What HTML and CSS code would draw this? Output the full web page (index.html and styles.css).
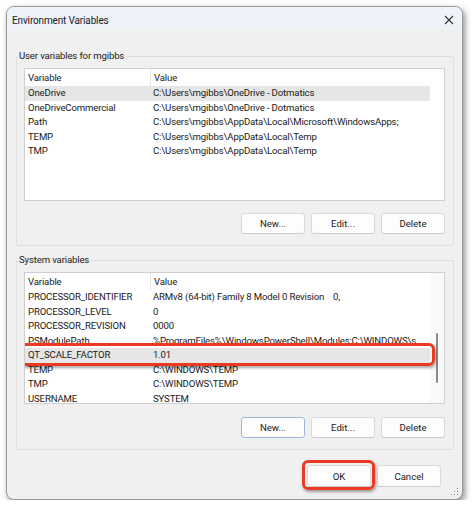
FILE: index.html
```html
<!DOCTYPE html>
<html lang="en">

<head>
  <meta charset="UTF-8">
  <title>Environment Variables</title>
  <link rel="stylesheet" href="styles.css">
</head>

<body>
  <div class="window">
    <div class="titlebar">
      <span class="title">Environment Variables</span>
      <svg class="close" width="10" height="10" viewBox="0 0 10 10">
        <path d="M1 1 L9 9 M9 1 L1 9" stroke="#333" stroke-width="1.1" fill="none" />
      </svg>
    </div>

    <div class="content">
      <!-- user block -->
      <fieldset class="group">
        <legend>User variables for mgibbs</legend>
        <div class="list">
          <div class="list-body">
            <div class="head"><span>Variable</span><span>Value</span></div>
            <div class="row sel"><span>OneDrive</span><span>C:\Users\mgibbs\OneDrive - Dotmatics</span></div>
            <div class="row"><span>OneDriveCommercial</span><span>C:\Users\mgibbs\OneDrive - Dotmatics</span></div>
            <div class="row"><span>Path</span><span>C:\Users\mgibbs\AppData\Local\Microsoft\WindowsApps;</span></div>
            <div class="row"><span>TEMP</span><span>C:\Users\mgibbs\AppData\Local\Temp</span></div>
            <div class="row"><span>TMP</span><span>C:\Users\mgibbs\AppData\Local\Temp</span></div>
          </div>
          <div class="scroll"></div>
        </div>
        <div class="buttons">
          <button>New...</button>
          <button>Edit...</button>
          <button>Delete</button>
        </div>
      </fieldset>

      <!-- system block -->
      <fieldset class="group sys">
        <legend>System variables</legend>
        <div class="list">
          <div class="list-body">
            <div class="head"><span>Variable</span><span>Value</span></div>
            <div class="row"><span>PROCESSOR_IDENTIFIER</span><span>ARMv8 (64-bit) Family 8 Model 0 Revision&nbsp;&nbsp;&nbsp; 0,</span></div>
            <div class="row"><span>PROCESSOR_LEVEL</span><span>0</span></div>
            <div class="row"><span>PROCESSOR_REVISION</span><span>0000</span></div>
            <div class="row"><span>PSModulePath</span><span>%ProgramFiles%\WindowsPowerShell\Modules;C:\WINDOWS\s...</span></div>
            <div class="row sel marked"><span>QT_SCALE_FACTOR</span><span>1.01</span></div>
            <div class="row"><span>TEMP</span><span>C:\WINDOWS\TEMP</span></div>
            <div class="row"><span>TMP</span><span>C:\WINDOWS\TEMP</span></div>
            <div class="row"><span>USERNAME</span><span>SYSTEM</span></div>
          </div>
          <div class="scroll track">
            <div class="thumb"></div>
          </div>
        </div>
        <div class="buttons">
          <button class="focus">New...</button>
          <button>Edit...</button>
          <button>Delete</button>
        </div>
      </fieldset>

      <div class="buttons footer">
        <button class="marked">OK</button>
        <button>Cancel</button>
      </div>
    </div>

    <svg class="grip" width="8" height="8" viewBox="0 0 8 8">
      <rect x="6" y="0" width="1" height="1" fill="#888" />
      <rect x="3" y="3" width="1" height="1" fill="#888" />
      <rect x="6" y="3" width="1" height="1" fill="#888" />
      <rect x="0" y="6" width="1" height="1" fill="#888" />
      <rect x="3" y="6" width="1" height="1" fill="#888" />
      <rect x="6" y="6" width="1" height="1" fill="#888" />
    </svg>
  </div>
</body>

</html>
```

FILE: styles.css
```css
* {
  box-sizing: border-box;
}

body {
  margin: 0;
  background: #fff;
  font-family: Roboto, "Noto Sans", sans-serif;
  font-size: 9.6px;
  letter-spacing: -0.15px;
  color: #1a1a1a;
}

.window {
  position: relative;
  margin: 6px 0 0 6px;
  width: 457px;
  height: 494px;
  border: 1px solid #9a9a9a;
  border-radius: 8px;
  background: #f0f0f0;
  box-shadow: 2px 3px 6px rgba(0, 0, 0, .45);
  overflow: hidden;
}

.titlebar {
  height: 26px;
  display: flex;
  align-items: center;
  justify-content: space-between;
  padding: 0 8px 0 5px;
  background: linear-gradient(#eef3fa 70%, #f0f0f0);
}

.title {
  font-size: 10px;
}

.content {
  padding: 16px 8px 0 9px;
}

/* group boxes */
.group {
  margin: 0;
  padding: 5px 8px 11px 7px;
  border: 1px solid #dedede;
  border-radius: 2px;
}

.group legend {
  margin-left: -6px;
  padding: 0 1px;
  line-height: 14px;
}

.sys {
  margin-top: 7px;
}

/* list views */
.list {
  display: flex;
  height: 133px;
  border: 1px solid #cfcfcf;
  background: #fff;
  overflow: hidden;
}

.sys .list {
  height: 132px;
}

.list-body {
  width: 405px;
}

.scroll {
  width: 14px;
}

.track {
  background: #f9f9f9;
}

.thumb {
  width: 2px;
  height: 50px;
  margin: 60px 0 0 6px;
  border-radius: 1px;
  background: #8a8a8a;
}

.head,
.row {
  display: grid;
  grid-template-columns: 125px 280px;
}

.head {
  height: 17px;
  line-height: 17px;
}

.head span + span {
  border-left: 1px solid #e5e5e5;
}

.row {
  height: 14.5px;
  line-height: 14.5px;
}

.head span,
.row span {
  padding-left: 3px;
  white-space: nowrap;
  overflow: hidden;
}

.sel {
  background: #e6e6e6;
}

/* red callout ring over the picked row and button */
.marked {
  position: relative;
}

.row.marked::after {
  content: "";
  position: absolute;
  left: -5px;
  right: -5px;
  top: -5px;
  bottom: -3px;
  border: 3px solid #eb3a22;
  border-radius: 6px;
  box-shadow: 1px 2px 3px rgba(0, 0, 0, .35);
}

/* buttons */
.buttons {
  display: flex;
  justify-content: flex-end;
  gap: 6px;
  margin-top: 12px;
}

.sys .buttons {
  margin-top: 13px;
}

button {
  width: 64px;
  height: 21px;
  padding: 0;
  font: inherit;
  letter-spacing: 0;
  color: #1a1a1a;
  background: #fdfdfd;
  border: 1px solid #d9d9d9;
  border-bottom-color: #cccccc;
  border-radius: 3px;
}

button.focus {
  border-color: #9fb6d6;
}

.footer {
  margin-top: 15px;
  padding-right: 13px;
}

.footer button {
  height: 22px;
}

button.marked::after {
  content: "";
  position: absolute;
  left: -6px;
  right: -5px;
  top: -6px;
  bottom: -4px;
  border: 3px solid #eb3a22;
  border-radius: 6px;
  box-shadow: 1px 2px 3px rgba(0, 0, 0, .35);
}

.grip {
  position: absolute;
  right: 3px;
  bottom: 3px;
}
```
